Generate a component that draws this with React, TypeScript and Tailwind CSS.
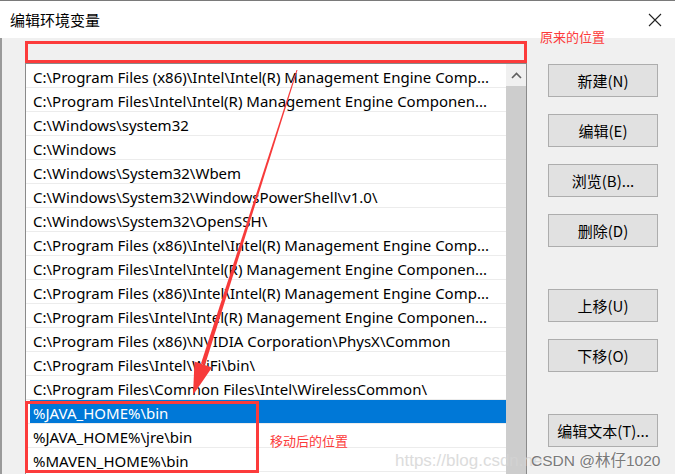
import React from "react";

const rows = [
  "C:\\Program Files (x86)\\Intel\\Intel(R) Management Engine Comp...",
  "C:\\Program Files\\Intel\\Intel(R) Management Engine Componen...",
  "C:\\Windows\\system32",
  "C:\\Windows",
  "C:\\Windows\\System32\\Wbem",
  "C:\\Windows\\System32\\WindowsPowerShell\\v1.0\\",
  "C:\\Windows\\System32\\OpenSSH\\",
  "C:\\Program Files (x86)\\Intel\\Intel(R) Management Engine Comp...",
  "C:\\Program Files\\Intel\\Intel(R) Management Engine Componen...",
  "C:\\Program Files (x86)\\Intel\\Intel(R) Management Engine Comp...",
  "C:\\Program Files\\Intel\\Intel(R) Management Engine Componen...",
  "C:\\Program Files (x86)\\NVIDIA Corporation\\PhysX\\Common",
  "C:\\Program Files\\Intel\\WiFi\\bin\\",
  "C:\\Program Files\\Common Files\\Intel\\WirelessCommon\\",
  "%JAVA_HOME%\\bin",
  "%JAVA_HOME%\\jre\\bin",
  "%MAVEN_HOME%\\bin",
];

function Btn({ label, className = "" }: { label: string; className?: string }) {
  return (
    <div
      className={
        "w-[110px] h-[33px] bg-[#e1e1e1] border border-[#adadad] flex items-center justify-center text-[15px] text-black leading-none " +
        className
      }
    >
      {label}
    </div>
  );
}

export default function App() {
  return (
    <div className="relative w-[675px] h-[474px] overflow-hidden bg-[#f0f0f0] font-['Noto_Sans','Noto_Sans_CJK_SC',sans-serif] text-black">
      {/* title bar */}
      <div className="h-[38px] bg-white border-t border-[#7a7a7a] flex items-center justify-between pl-[10px] pr-[12px]">
        <span className="text-[15px] font-['Noto_Sans_CJK_SC',sans-serif] leading-none">编辑环境变量</span>
        <svg width="14" height="14" viewBox="0 0 14 14" className="mr-[1px]">
          <path d="M1 1 L13 13 M13 1 L1 13" stroke="#222" strokeWidth="1.1" fill="none" />
        </svg>
      </div>

      {/* body */}
      <div className="flex h-[436px] border-l-2 border-[#9a9a9a] pl-[23px] pt-[3px]">
        <div className="w-[502px] flex flex-col">
          <div className="h-[22px] border-[3px] border-[#fc3b3b]" />
          <div className="flex-1 flex border border-[#8a8a8a] border-b-0 bg-white overflow-hidden">
            <div className="w-[480px] flex flex-col">
              {rows.map((r, i) => (
                <div key={i} className="h-[24px] shrink-0 border-b border-[#ececec] pl-[4px] flex">
                  <div
                    className={
                      "flex-1 pl-[3px] pt-[4px] flex items-center whitespace-nowrap overflow-hidden text-[15px] " +
                      (i === 14 ? "bg-[#0078d7] text-white" : "")
                    }
                  >
                    {r}
                  </div>
                </div>
              ))}
            </div>
            <div className="w-[20px] flex flex-col bg-[#cdcdcd]">
              <div className="h-[22px] bg-[#f0f0f0] flex items-center justify-center">
                <svg width="11" height="7" viewBox="0 0 11 7">
                  <path d="M1 6 L5.5 1.5 L10 6" stroke="#606060" strokeWidth="1.6" fill="none" />
                </svg>
              </div>
            </div>
          </div>
        </div>

        <div className="ml-[21px] mt-[23px] flex flex-col font-['Noto_Sans_CJK_SC',sans-serif]">
          <Btn label="新建(N)" />
          <Btn label="编辑(E)" className="mt-[17px]" />
          <Btn label="浏览(B)..." className="mt-[17px]" />
          <Btn label="删除(D)" className="mt-[17px]" />
          <Btn label="上移(U)" className="mt-[42px]" />
          <Btn label="下移(O)" className="mt-[17px]" />
          <Btn label="编辑文本(T)..." className="mt-[42px]" />
        </div>
      </div>

      {/* annotations */}
      <span className="absolute left-[540px] top-[30px] text-[13px] leading-none text-[#fc3b3b] font-['Noto_Sans_CJK_SC',sans-serif]">
        原来的位置
      </span>
      <div className="absolute left-[25px] top-[401px] w-[234px] h-[72px] border-[3px] border-[#fc3b3b]" />
      <span className="absolute left-[270px] top-[434px] text-[13px] leading-none text-[#fc3b3b] font-['Noto_Sans_CJK_SC',sans-serif]">
        移动后的位置
      </span>

      <svg className="absolute inset-0 pointer-events-none" width="675" height="474" viewBox="0 0 675 474">
        <polygon points="296.5,70 297.5,70 205,365 201,363.6" fill="#f73a3a" />
        <polygon points="193,395 212,367.5 194.5,361.5" fill="#f73a3a" />
      </svg>

      {/* watermark */}
      <span className="absolute left-[395px] top-[452px] text-[17px] leading-none text-[#d4d4d4] opacity-80 font-['Liberation_Sans',sans-serif] whitespace-nowrap">
        https://blog.csdn.ne
      </span>
      <span className="absolute left-[531px] top-[453px] text-[15.5px] leading-none text-[#7a7a7a] font-['Liberation_Sans','Noto_Sans_CJK_SC',sans-serif] whitespace-nowrap [text-shadow:0_0_2px_#fff]">
        CSDN @林仔1020
      </span>
    </div>
  );
}
